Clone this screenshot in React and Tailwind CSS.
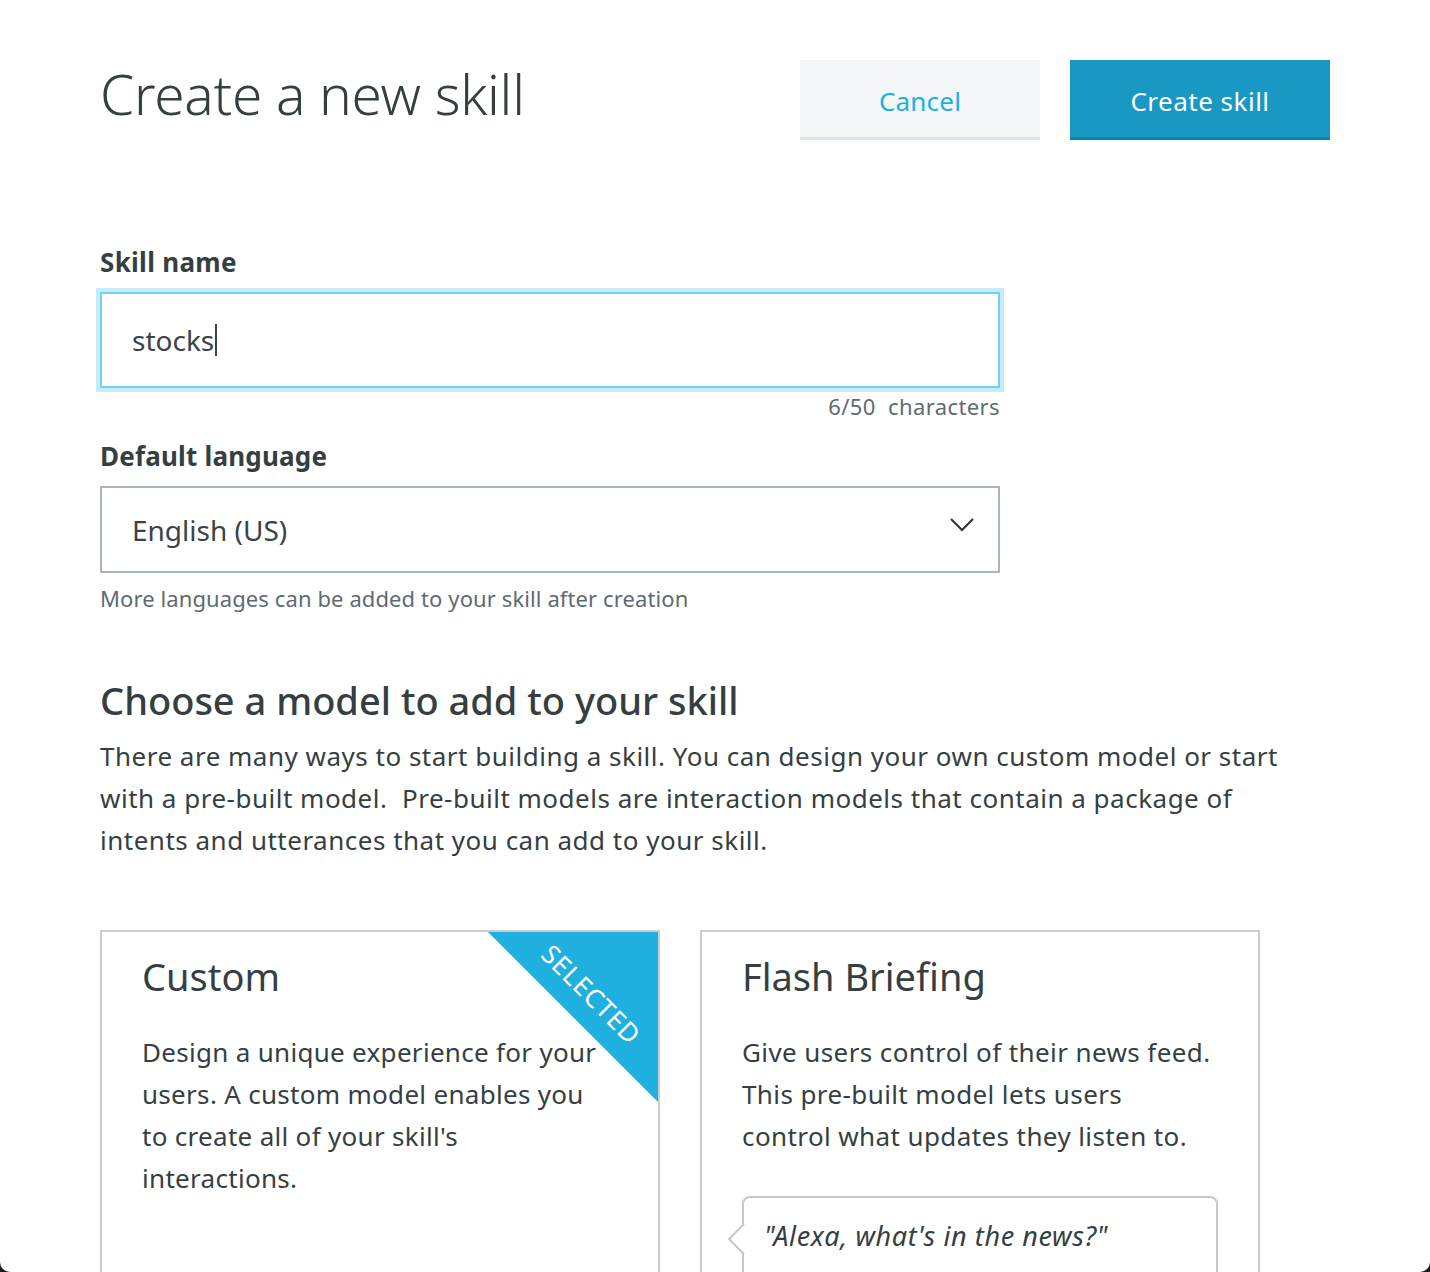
import React from "react";

const font = { fontFamily: '"Noto Sans", "Open Sans", sans-serif' };

export default function App() {
  return (
    <div className="h-[1272px] w-[1430px] bg-[#1c1c1c] overflow-hidden" style={font}>
      <div className="h-full bg-white rounded-b-[10px] px-[100px] pt-[60px] text-[#353f42] overflow-hidden">
        {/* Header */}
        <div className="flex items-start justify-between">
          <h1 className="text-[55px] font-light leading-[80px] -mt-[6px] tracking-[-0.3px]">Create a new skill</h1>
          <div className="flex gap-[30px]">
            <button className="w-[240px] h-[80px] bg-[#f2f6f7] border-b-[3px] border-[#dce6e9] text-[#1fb0e2] text-[26px] leading-none pt-[4px] tracking-[0.2px]">
              Cancel
            </button>
            <button className="w-[260px] h-[80px] bg-[#1a98c4] border-b-[3px] border-[#1281a8] text-white text-[26px] leading-none pt-[4px] tracking-[0.5px]">
              Create skill
            </button>
          </div>
        </div>

        {/* Skill name */}
        <div className="mt-[104px] w-[900px]">
          <div className="text-[26px] font-bold leading-[36px] tracking-[0.3px]">Skill name</div>
          <div className="mt-[12px] h-[96px] border-2 border-[#6dd2f4] shadow-[0_0_0_4px_#c7ecf9] flex items-center pl-[30px]">
            <span className="text-[28px] text-[#3a4447]">stocks</span>
            <span className="ml-[1px] w-[2px] h-[32px] bg-[#3a4447]" />
          </div>
          <div className="mt-[6px] text-right text-[22px] leading-[24px] text-[#5e6b70] tracking-[0.4px]">6/50&nbsp;&nbsp;characters</div>

          <div className="mt-[20px] text-[26px] font-bold leading-[36px] tracking-[0.2px]">Default language</div>
          <div className="mt-[12px] h-[87px] border-2 border-[#aab7b8] flex items-center justify-between pl-[30px] pr-[24px]">
            <span className="text-[28px] text-[#3a4447]">English (US)</span>
            <svg width="24" height="14" viewBox="0 0 24 14" className="-mt-[9px]">
              <polyline points="1,1 12,12 23,1" fill="none" stroke="#2b3336" strokeWidth="2" />
            </svg>
          </div>
          <div className="mt-[12px] text-[22px] leading-[26px] text-[#5e6b70] whitespace-nowrap tracking-[0.1px]">
            More languages can be added to your skill after creation
          </div>
        </div>

        {/* Choose model */}
        <h2 className="mt-[69px] text-[38px] font-medium leading-[40px]">Choose a model to add to your skill</h2>
        <p className="mt-[15px] text-[26px] leading-[42px] whitespace-nowrap tracking-[0.5px]">
          There are many ways to start building a skill. You can design your own custom model or start
          <br />
          with a pre-built model.&nbsp; Pre-built models are interaction models that contain a package of
          <br />
          intents and utterances that you can add to your skill.
        </p>

        {/* Cards */}
        <div className="mt-[69px] flex gap-[40px]">
          <div className="relative w-[560px] h-[400px] border-2 border-[#cccccc] px-[40px] pt-[21px] overflow-hidden">
            <div className="absolute top-0 right-0 w-[170px] h-[170px] bg-[#1fb0e0] [clip-path:polygon(0_0,100%_0,100%_100%)]" />
            <span className="absolute right-[66px] top-[62px] translate-x-1/2 -translate-y-1/2 rotate-45 text-white text-[26px] leading-none tracking-[0.8px] whitespace-nowrap">
              SELECTED
            </span>
            <div className="relative text-[38px] leading-[46px]">Custom</div>
            <p className="relative mt-[32px] text-[26px] leading-[42px] whitespace-nowrap tracking-[0.3px]">
              Design a unique experience for your
              <br />
              users. A custom model enables you
              <br />
              to create all of your skill's
              <br />
              interactions.
            </p>
          </div>

          <div className="relative w-[560px] h-[400px] border-2 border-[#cccccc] px-[40px] pt-[21px]">
            <div className="text-[38px] leading-[46px]">Flash Briefing</div>
            <p className="mt-[32px] text-[26px] leading-[42px] whitespace-nowrap tracking-[0.4px]">
              Give users control of their news feed.
              <br />
              This pre-built model lets users
              <br />
              control what updates they listen to.
            </p>
            <div className="relative mt-[39px] w-[476px] h-[120px] border-2 border-[#c4c8cc] rounded-[8px] pl-[20px] pt-[18px]">
              <svg width="18" height="30" viewBox="0 0 18 30" className="absolute -left-[16px] top-[26px]">
                <polygon points="16,0 1,15 16,30" fill="white" />
                <polyline points="16,0 1,15 16,30" fill="none" stroke="#c4c8cc" strokeWidth="2" />
              </svg>
              <span className="text-[27px] italic leading-[40px] text-[#353f42] tracking-[0.6px]">"Alexa, what's in the news?"</span>
            </div>
          </div>
        </div>
      </div>
    </div>
  );
}
